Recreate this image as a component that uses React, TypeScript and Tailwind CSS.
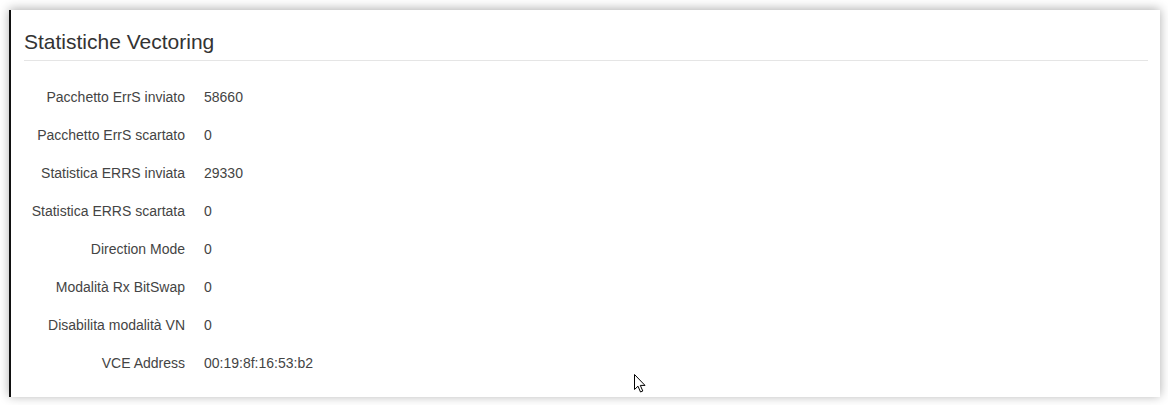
import React from "react";

const rows: [string, string][] = [
  ["Pacchetto ErrS inviato", "58660"],
  ["Pacchetto ErrS scartato", "0"],
  ["Statistica ERRS inviata", "29330"],
  ["Statistica ERRS scartata", "0"],
  ["Direction Mode", "0"],
  ["Modalità Rx BitSwap", "0"],
  ["Disabilita modalità VN", "0"],
  ["VCE Address", "00:19:8f:16:53:b2"],
];

export default function App() {
  return (
    <div
      className="w-[1168px] h-[405px] bg-white overflow-hidden pt-[10px] pl-[9px] pr-[8px]"
      style={{ fontFamily: '"Liberation Sans", Arial, sans-serif' }}
    >
      <div className="relative h-[387px] bg-white border-l-2 border-[#111] shadow-[0_-1px_10px_rgba(0,0,0,0.32)]">
        <div className="pl-[13px] pr-[12px]">
          <div className="h-[51px] flex items-end pb-[8px] border-b border-[#e5e5e5]">
            <h2 className="text-[21px] leading-none text-[#333]">Statistiche Vectoring</h2>
          </div>
        </div>
        <div className="pt-[17px]">
          {rows.map(([label, value]) => (
            <div key={label} className="flex items-center h-[38px] text-[14px] text-[#444]">
              <div className="w-[193px] text-right pr-[19px]">{label}</div>
              <div>{value}</div>
            </div>
          ))}
        </div>
        <svg
          className="absolute left-[623px] top-[364px]"
          width="12"
          height="19"
          viewBox="0 0 12 19"
        >
          <path
            d="M0.5 0.5 L0.5 15.5 L4 12.2 L6.5 18 L8.8 17 L6.3 11.4 L11 11.4 Z"
            fill="#fff"
            stroke="#000"
            strokeWidth="1"
            strokeLinejoin="miter"
          />
        </svg>
      </div>
    </div>
  );
}
